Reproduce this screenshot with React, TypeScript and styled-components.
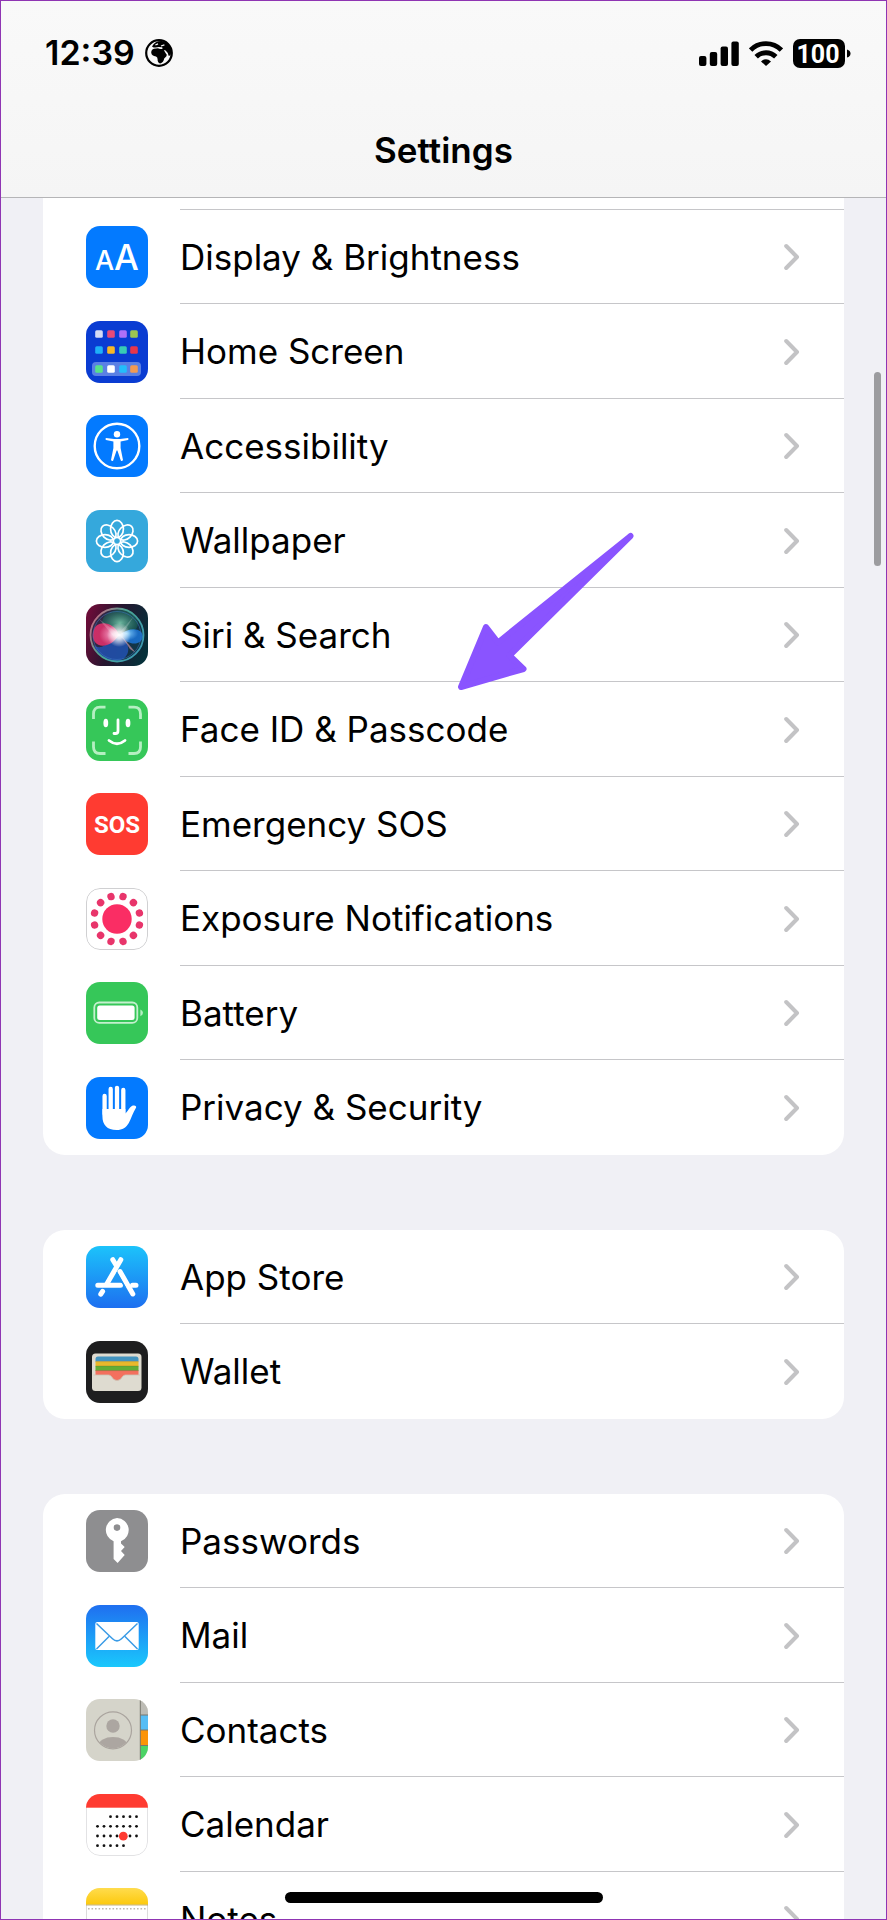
import React from 'react';
import styled, { createGlobalStyle } from 'styled-components';

const GlobalStyle = createGlobalStyle`
	* {
		box-sizing: border-box;
	}
	body {
		margin: 0;
		font-family: Inter, 'Liberation Sans', sans-serif;
		color: #000;
		background: #f0f0f5;
	}
	ul {
		list-style: none;
		margin: 0;
		padding: 0;
	}
`;

const Screen = styled.div`
	position: relative;
	height: 100vh;
	overflow: hidden;
	border: 1px solid #8f35b3;
	background: #f0f0f5;
`;

const Header = styled.header`
	height: 197px;
	padding-top: 32px;
	background: linear-gradient(#f9f9f9, #f5f5f5);
	border-bottom: 1px solid #b5b5b7;
`;

const StatusBar = styled.div`
	display: flex;
	align-items: center;
	justify-content: space-between;
	height: 40px;
	padding: 0 35px 0 44px;
`;

const StatusGroup = styled.div`
	display: flex;
	align-items: center;
	gap: 10px;
`;

const Clock = styled.time`
	font-size: 34px;
	line-height: 40px;
	font-weight: 600;
`;

const Title = styled.h1`
	margin: 55px 0 0;
	font-size: 35px;
	line-height: 44px;
	font-weight: 600;
	text-align: center;
`;

const Content = styled.main`
	display: flex;
	flex-direction: column;
	gap: 75px;
	padding: 0 42px;
`;

const Card = styled.section<{ $scrolled?: boolean }>`
	background: #fff;
	border-radius: ${({ $scrolled }) => ($scrolled ? '0 0 22px 22px' : '22px')};
`;

const Peek = styled.div`
	height: 12px;
	margin-left: 137px;
	border-bottom: 1px solid #c6c6c9;
`;

const RowItem = styled.li`
	height: 94px;

	&:nth-child(even) {
		height: 95px;
	}
	&:last-child > a > span {
		border-bottom-color: transparent;
	}
`;

const RowLink = styled.a`
	display: flex;
	align-items: center;
	height: 100%;
	padding-left: 43px;
	color: inherit;
	text-decoration: none;
`;

const RowBody = styled.span`
	flex: 1;
	display: flex;
	align-items: center;
	justify-content: space-between;
	height: 100%;
	margin-left: 32px;
	padding-right: 44px;
	border-bottom: 1px solid #c6c6c9;
`;

const Label = styled.span`
	font-size: 35px;
	line-height: 44px;
`;

const Tile = styled.svg`
	flex: none;
	width: 62px;
	height: 62px;
	border-radius: 14px;
`;

const ScrollThumb = styled.div`
	position: absolute;
	top: 371px;
	right: 5px;
	width: 7px;
	height: 194px;
	border-radius: 4px;
	background: #9c9c9f;
`;

const HomeIndicator = styled.div`
	position: absolute;
	bottom: 16px;
	left: 50%;
	width: 318px;
	height: 11px;
	border-radius: 6px;
	background: #000;
	transform: translateX(-50%);
`;

const Pointer = styled.svg`
	position: absolute;
	top: 529px;
	left: 449px;
	width: 190px;
	height: 170px;
	pointer-events: none;
`;

const DisplayIcon = () => (
	<Tile viewBox="0 0 62 62" aria-hidden="true">
		<rect width="62" height="62" fill="#037aff" />
		<g fill="#fff" fontFamily="Inter, sans-serif" fontWeight="500">
			<text x="9" y="44" fontSize="27">
				A
			</text>
			<text x="28" y="44" fontSize="35">
				A
			</text>
		</g>
	</Tile>
);

const homeColumns = [13, 25, 37, 48];
const homeApps = [
	{ y: 13, colors: ['#d5dbf5', '#e84a78', '#b070f8', '#9cc552'] },
	{ y: 29, colors: ['#1eb0f8', '#f8b826', '#38ccb4', '#e8364a'] },
	{ y: 48, colors: ['#57e389', '#ffffff', '#22bdfb', '#f29a52'] },
];

const HomeIcon = () => (
	<Tile viewBox="0 0 62 62" aria-hidden="true">
		<rect width="62" height="62" fill="#0a3cd2" />
		<rect x="6" y="41" width="49" height="14" rx="4" fill="#5a80e4" />
		{homeApps.map(({ y, colors }) =>
			colors.map((color, i) => (
				<rect key={color} x={homeColumns[i] - 3.8} y={y - 3.8} width="7.6" height="7.6" rx="1.5" fill={color} />
			)),
		)}
	</Tile>
);

const AccessibilityIcon = () => (
	<Tile viewBox="0 0 62 62" aria-hidden="true">
		<rect width="62" height="62" fill="#037aff" />
		<circle cx="31" cy="31" r="22.3" fill="none" stroke="#fff" strokeWidth="2.4" />
		<circle cx="31" cy="19.3" r="3.2" fill="#fff" />
		<path
			d="M20 23 L28 24 H34 L42 23 Q43.2 24.2 42 25 L34.6 26.6 V33 L37 45 Q36 46.6 34.8 45.4 L31.4 35.5 H30.6 L27.2 45.4 Q26 46.6 25 45 L27.4 33 V26.6 L20 25 Q18.8 24.2 20 23Z"
			fill="#fff"
		/>
	</Tile>
);

const WallpaperIcon = () => (
	<Tile viewBox="0 0 62 62" aria-hidden="true">
		<rect width="62" height="62" fill="#35a8dc" />
		<g fill="none" stroke="#fff" strokeWidth="1.7">
			{[0, 45, 90, 135, 180, 225, 270, 315].map((angle) => (
				<ellipse key={angle} cx="31" cy="19" rx="6.4" ry="8.6" transform={`rotate(${angle} 31 31)`} />
			))}
		</g>
	</Tile>
);

const SiriIcon = () => (
	<Tile viewBox="0 0 62 62" aria-hidden="true">
		<defs>
			<linearGradient id="siriBg" x1="0" y1="0.3" x2="1" y2="0.6">
				<stop offset="0" stopColor="#6b0d38" />
				<stop offset="0.45" stopColor="#26152f" />
				<stop offset="1" stopColor="#06303a" />
			</linearGradient>
			<linearGradient id="siriRing" x1="0" y1="0" x2="1" y2="0.6">
				<stop offset="0" stopColor="#e85a80" />
				<stop offset="0.5" stopColor="#4aa592" />
				<stop offset="1" stopColor="#3d9ab0" />
			</linearGradient>
			<radialGradient id="siriGreen">
				<stop offset="0" stopColor="#6fb8a0" />
				<stop offset="1" stopColor="#186a58" stopOpacity="0.5" />
			</radialGradient>
			<radialGradient id="siriPink" cx="0.75" cy="0.5">
				<stop offset="0" stopColor="#f6a2c8" />
				<stop offset="1" stopColor="#dc2f6a" stopOpacity="0.9" />
			</radialGradient>
			<radialGradient id="siriBlue" cx="0.3" cy="0.3">
				<stop offset="0" stopColor="#8cd4ff" />
				<stop offset="1" stopColor="#1b78e0" stopOpacity="0.8" />
			</radialGradient>
			<radialGradient id="siriGlow">
				<stop offset="0" stopColor="#fff" />
				<stop offset="0.3" stopColor="#fff" stopOpacity="0.85" />
				<stop offset="1" stopColor="#fff" stopOpacity="0" />
			</radialGradient>
		</defs>
		<rect width="62" height="62" fill="url(#siriBg)" />
		<circle cx="31" cy="31" r="26" fill="#17485c" fillOpacity="0.45" />
		<ellipse cx="34" cy="19" rx="18" ry="13" fill="url(#siriGreen)" />
		<path d="M8 41 C17 49 27 32 33 31 C43 37 46 49 37 55 C25 61 12 54 8 41Z" fill="#2358c8" fillOpacity="0.7" />
		<path d="M33 31 C29 18 10 14 7 28 C4 43 22 48 33 31Z" fill="url(#siriPink)" />
		<path d="M33 31 C44 22 57 24 57 33 C55 42 42 42 33 31Z" fill="url(#siriBlue)" />
		<path d="M34 30 L50 49 L44 45Z" fill="#e4a0b0" fillOpacity="0.6" />
		<path d="M12 14 L30 28 L28 33Z M48 12 L34 28 L36 31Z" fill="#fff" fillOpacity="0.2" />
		<circle cx="33" cy="31" r="12" fill="url(#siriGlow)" />
		<circle cx="31" cy="31" r="26.5" fill="none" stroke="url(#siriRing)" strokeWidth="1.8" />
		<circle cx="31" cy="31.5" r="24" fill="none" stroke="#3d78c8" strokeOpacity="0.5" />
	</Tile>
);

const FaceIdIcon = () => (
	<Tile viewBox="0 0 62 62" aria-hidden="true">
		<rect width="62" height="62" fill="#36c759" />
		<g fill="none" strokeWidth="2.8">
			<path
				d="M19.5 8.2 H14 Q7.5 8.2 7.5 15 V20 M42.5 8.2 H48 Q54.5 8.2 54.5 15 V20 M7.5 42.5 V48 Q7.5 54.5 14 54.5 H19.5 M42.5 54.5 H48 Q54.5 54.5 54.5 48 V42.5"
				stroke="#b5efc2"
			/>
			<path d="M32 21 V32 Q32 34.5 29.5 34.5 H28" stroke="#fff" strokeLinecap="round" />
			<path d="M23 41.5 Q31 48 39 41.5" stroke="#fff" strokeLinecap="round" />
		</g>
		<ellipse cx="19.8" cy="24" rx="2.4" ry="4.3" fill="#fff" />
		<ellipse cx="42" cy="24" rx="2.4" ry="4.3" fill="#fff" />
	</Tile>
);

const SosIcon = () => (
	<Tile viewBox="0 0 62 62" aria-hidden="true">
		<rect width="62" height="62" fill="#ff3b31" />
		<text
			x="31"
			y="40"
			fill="#fff"
			fontFamily="Roboto, sans-serif"
			fontSize="24"
			fontWeight="700"
			textAnchor="middle"
		>
			SOS
		</text>
	</Tile>
);

const ExposureIcon = () => (
	<Tile viewBox="0 0 62 62" aria-hidden="true">
		<rect x="0.5" y="0.5" width="61" height="61" rx="13.5" fill="#fff" stroke="#d0d0d2" />
		<circle cx="31" cy="31" r="14.7" fill="#fa2d64" />
		{Array.from({ length: 12 }, (_, i) => (
			<circle key={i} cx="31" cy="7.8" r="3.7" fill="#e8356b" transform={`rotate(${15 + i * 30} 31 31)`} />
		))}
	</Tile>
);

const BatteryIcon = () => (
	<Tile viewBox="0 0 62 62" aria-hidden="true">
		<rect width="62" height="62" fill="#36c759" />
		<rect x="8.3" y="20.5" width="43" height="20.4" rx="5" fill="none" stroke="#c4f0ce" strokeWidth="1.8" />
		<rect x="11.2" y="23.4" width="37.4" height="14.6" rx="2.5" fill="#fff" />
		<path d="M54.4 27.4 Q57 28.5 57 30.8 Q57 33 54.4 34.2Z" fill="#b5efc2" />
	</Tile>
);

const PrivacyIcon = () => (
	<Tile viewBox="0 0 62 62" aria-hidden="true">
		<rect width="62" height="62" fill="#037aff" />
		<path d="M18.6 19 V37 M24.7 12 V34 M31 10.8 V34 M37.3 13 V36" stroke="#fff" strokeWidth="4.3" strokeLinecap="round" />
		<path
			d="M16.4 32 H39.4 V36.4 C42 34.5 43.4 30.2 46.2 28.8 C48.6 27.8 51 28.8 50 30.8 C47 35.6 45.4 41 42.8 46 C40.2 50.6 36.6 53 30.5 53 C21 53 16.4 47.8 16.4 39Z"
			fill="#fff"
		/>
	</Tile>
);

const AppStoreIcon = () => (
	<Tile viewBox="0 0 62 62" aria-hidden="true">
		<defs>
			<linearGradient id="storeBg" x1="0" y1="0" x2="0" y2="1">
				<stop offset="0" stopColor="#1cc3fb" />
				<stop offset="1" stopColor="#1d6ff0" />
			</linearGradient>
		</defs>
		<rect width="62" height="62" fill="url(#storeBg)" />
		<g fill="none" stroke="#fff" strokeWidth="5" strokeLinecap="round">
			<path d="M34.8 13.7 L20.8 38 M16.6 45.4 L14.8 48.2" />
			<path d="M11.8 39.3 H34.5 M46.5 39.3 H50" />
			<path d="M26.8 13.7 L30 19 M34 25.5 L46.8 48" />
		</g>
		<path d="M30.6 26.5 L39.5 42" stroke="#2095f6" strokeWidth="1.2" />
	</Tile>
);

const WalletIcon = () => (
	<Tile viewBox="0 0 62 62" aria-hidden="true">
		<rect width="62" height="62" fill="#1e1e1f" />
		<rect x="6" y="12.5" width="49.5" height="37.5" rx="3.5" fill="#dedbd0" />
		<path d="M9.5 20 V18 Q9.5 15.5 12 15.5 H50 Q52.5 15.5 52.5 18 V20.5 H9.5Z" fill="#4494bf" />
		<rect x="9.5" y="20.3" width="43" height="5" fill="#e9b92b" />
		<rect x="9.5" y="25" width="43" height="5" fill="#62ad35" />
		<path d="M9.5 29.6 H52.5 V34 H39.5 Q37.5 34 36.4 35.8 Q34.5 39.5 31 39.5 Q27.5 39.5 25.6 35.8 Q24.5 34 22.5 34 H9.5Z" fill="#f3705e" />
		<path d="M9.5 20.6 H52.5 M9.5 25 H52.5 M9.5 29.6 H52.5" stroke="#4c4a30" strokeOpacity="0.3" strokeWidth="0.7" />
		<path d="M7.5 34 H22.5 Q24.5 34 25.6 35.8 Q27.5 39.5 31 39.5 Q34.5 39.5 36.4 35.8 Q37.5 34 39.5 34 H54" fill="none" stroke="#c9c5b8" strokeWidth="0.8" />
	</Tile>
);

const PasswordsIcon = () => (
	<Tile viewBox="0 0 62 62" aria-hidden="true">
		<rect width="62" height="62" fill="#8e8e90" />
		<path
			fillRule="evenodd"
			d="M31 8 A12 12 0 0 1 35 31.2 V33.5 L38.7 37 L35 41 L38.7 45 L31.6 53 L27.6 49 V31.2 A12 12 0 0 1 31 8Z M31 14.3 A3.3 3.3 0 1 0 31 20.9 A3.3 3.3 0 1 0 31 14.3Z"
			fill="#fff"
		/>
	</Tile>
);

const MailIcon = () => (
	<Tile viewBox="0 0 62 62" aria-hidden="true">
		<defs>
			<linearGradient id="mailBg" x1="0" y1="0" x2="0" y2="1">
				<stop offset="0" stopColor="#1f6ff0" />
				<stop offset="1" stopColor="#1ac8fc" />
			</linearGradient>
		</defs>
		<rect width="62" height="62" fill="url(#mailBg)" />
		<rect x="9.3" y="17" width="43.4" height="28" rx="2" fill="#fff" />
		<path
			d="M10.5 18.5 L26.5 33.8 Q31 38 35.5 33.8 L51.5 18.5 M10.5 44 L23 31.5 M51.5 44 L39 31.5"
			fill="none"
			stroke="#3a9be6"
			strokeWidth="1.5"
		/>
	</Tile>
);

const ContactsIcon = () => (
	<Tile viewBox="0 0 62 62" aria-hidden="true">
		<defs>
			<clipPath id="avatarClip">
				<circle cx="27" cy="31.3" r="18" />
			</clipPath>
		</defs>
		<rect width="62" height="62" fill="#d5d4ca" />
		<rect x="54" width="8" height="16" fill="#bdbcb5" />
		<rect x="54" y="16" width="8" height="15" fill="#56bdf5" />
		<rect x="54" y="31" width="8" height="16" fill="#fb9408" />
		<rect x="54" y="47" width="8" height="15" fill="#4cd466" />
		<path d="M54.3 0 V62 M54 16 H62 M54 31 H62 M54 46.5 H62" stroke="#78776f" strokeWidth="1" />
		<circle cx="27" cy="31.3" r="18.5" fill="none" stroke="#aaa49e" strokeWidth="1.2" />
		<g fill="#aca6a1" clipPath="url(#avatarClip)">
			<circle cx="27" cy="27" r="6.7" />
			<ellipse cx="27" cy="46.5" rx="14.5" ry="8.5" />
		</g>
	</Tile>
);

const calendarRows = [
	{ y: 22.7, from: 2, to: 6 },
	{ y: 32.3, from: 0, to: 6 },
	{ y: 42, from: 0, to: 6 },
	{ y: 51.7, from: 0, to: 4 },
];

const CalendarIcon = () => (
	<Tile viewBox="0 0 62 62" aria-hidden="true">
		<rect x="0.5" y="0.5" width="61" height="61" rx="13.5" fill="#fff" stroke="#e2e2e4" />
		<rect width="62" height="13.7" fill="#ff3b31" />
		{calendarRows.map(({ y, from, to }) =>
			Array.from({ length: to - from + 1 }, (_, i) => (
				<circle key={`${y}-${i}`} cx={11.5 + (from + i) * 6.5} cy={y} r="1.4" fill="#111" />
			)),
		)}
		<circle cx="37.3" cy="42.2" r="4.4" fill="#ff3b31" />
	</Tile>
);

const NotesIcon = () => (
	<Tile viewBox="0 0 62 62" aria-hidden="true">
		<defs>
			<linearGradient id="notesBg" x1="0" y1="0" x2="0" y2="1">
				<stop offset="0" stopColor="#ffdc4e" />
				<stop offset="1" stopColor="#fcc90c" />
			</linearGradient>
		</defs>
		<rect x="0.5" y="0.5" width="61" height="61" rx="13.5" fill="#fff" stroke="#dcdcdc" />
		<rect width="62" height="16.7" fill="url(#notesBg)" />
		<path d="M0 17 H62" stroke="#b59e56" strokeWidth="0.8" />
		<path d="M2 20.8 H61" stroke="#bdb9ae" strokeWidth="1.6" strokeDasharray="1.6 1.9" />
	</Tile>
);

const Chevron = () => (
	<svg width="16" height="29" viewBox="0 0 16 29" fill="none" aria-hidden="true">
		<path d="M2.2 4 L13 15 L2.2 26" stroke="#c3c3c5" strokeWidth="4" strokeLinecap="round" strokeLinejoin="round" />
	</svg>
);

const GlobeIcon = () => (
	<svg width="28" height="28" viewBox="0 0 28 28" aria-hidden="true">
		<circle cx="14" cy="14" r="12.8" fill="none" stroke="#000" strokeWidth="2.2" />
		<path
			d="M7 7.4 Q10.4 1.6 17 2 Q25 4 26.4 12 L25.6 16.6 L23.6 16.8 Q23.2 13.4 20.6 11.4 L18.8 11 L21 14.8 Q22.4 15.4 21.4 17.2 L19.2 19.4 Q18.6 23.4 15.2 24.4 Q12.4 23.6 12.6 20.2 Q12.6 18 11 17.4 Q6.6 17.4 6.2 13.6 Q6.4 10.4 9 9.8 L13 9.2 Q14.6 10.4 17.6 9.8 L17.2 8.2 L13.8 8 L10.6 8.6 L8.6 8.4Z"
			fill="#000"
		/>
		<path d="M10.4 6 L13 4.8 M16 7 L19.4 5.8" stroke="#f8f8f8" strokeWidth="1.3" />
	</svg>
);

const SignalIcon = () => (
	<svg width="40" height="25" viewBox="0 0 40 25" aria-label="Signal">
		<rect x="0" y="15" width="7.4" height="10" rx="2" />
		<rect x="10.8" y="11" width="7.4" height="14" rx="2" />
		<rect x="21.6" y="5.5" width="7.4" height="19.5" rx="2" />
		<rect x="32.4" y="0.5" width="7.4" height="24.5" rx="2" />
	</svg>
);

const WifiIcon = () => (
	<svg width="34" height="25" viewBox="0 0 34 25" aria-label="Wi-Fi">
		<g fill="none" stroke="#000" strokeWidth="4.8">
			<path d="M1.6 9 C10 0.4 24 0.4 32.4 9" />
			<path d="M7.2 15.8 C12.6 10.4 21.4 10.4 26.8 15.8" />
		</g>
		<path d="M12 20.4 Q17 16 22 20.4 L17 25Z" />
	</svg>
);

const BatteryStatus = () => (
	<svg width="58" height="29" viewBox="0 0 58 29" aria-label="Battery level">
		<rect width="52" height="29" rx="7" />
		<path d="M54 10.5 Q57.5 11.5 57.5 14.5 Q57.5 17.5 54 18.5Z" />
		<text x="25" y="23.5" fill="#fff" fontFamily="Roboto, sans-serif" fontSize="25" fontWeight="700" textAnchor="middle">
			100
		</text>
	</svg>
);

interface ISetting {
	label: string;
	icon: React.ComponentType;
}

const deviceSettings: ISetting[] = [
	{ label: 'Display & Brightness', icon: DisplayIcon },
	{ label: 'Home Screen', icon: HomeIcon },
	{ label: 'Accessibility', icon: AccessibilityIcon },
	{ label: 'Wallpaper', icon: WallpaperIcon },
	{ label: 'Siri & Search', icon: SiriIcon },
	{ label: 'Face ID & Passcode', icon: FaceIdIcon },
	{ label: 'Emergency SOS', icon: SosIcon },
	{ label: 'Exposure Notifications', icon: ExposureIcon },
	{ label: 'Battery', icon: BatteryIcon },
	{ label: 'Privacy & Security', icon: PrivacyIcon },
];

const storeSettings: ISetting[] = [
	{ label: 'App Store', icon: AppStoreIcon },
	{ label: 'Wallet', icon: WalletIcon },
];

const appSettings: ISetting[] = [
	{ label: 'Passwords', icon: PasswordsIcon },
	{ label: 'Mail', icon: MailIcon },
	{ label: 'Contacts', icon: ContactsIcon },
	{ label: 'Calendar', icon: CalendarIcon },
	{ label: 'Notes', icon: NotesIcon },
];

function SettingList({ items }: { items: ISetting[] }) {
	return (
		<ul>
			{items.map(({ label, icon: Icon }) => (
				<RowItem key={label}>
					<RowLink href="#">
						<Icon />
						<RowBody>
							<Label>{label}</Label>
							<Chevron />
						</RowBody>
					</RowLink>
				</RowItem>
			))}
		</ul>
	);
}

function App() {
	return (
		<Screen>
			<GlobalStyle />
			<Header>
				<StatusBar>
					<StatusGroup>
						<Clock>12:39</Clock>
						<GlobeIcon />
					</StatusGroup>
					<StatusGroup>
						<SignalIcon />
						<WifiIcon />
						<BatteryStatus />
					</StatusGroup>
				</StatusBar>
				<Title>Settings</Title>
			</Header>
			<Content>
				<Card $scrolled>
					<Peek />
					<SettingList items={deviceSettings} />
				</Card>
				<Card>
					<SettingList items={storeSettings} />
				</Card>
				<Card>
					<SettingList items={appSettings} />
				</Card>
			</Content>
			<Pointer viewBox="450 530 190 170" aria-hidden="true">
				<path
					d="M461 687 L486 627 L498 642.5 L630.5 536 L509.5 655.5 L523.5 669Z"
					fill="#8a54ff"
					stroke="#8a54ff"
					strokeWidth="6"
					strokeLinejoin="round"
				/>
			</Pointer>
			<ScrollThumb />
			<HomeIndicator />
		</Screen>
	);
}

export default App;
